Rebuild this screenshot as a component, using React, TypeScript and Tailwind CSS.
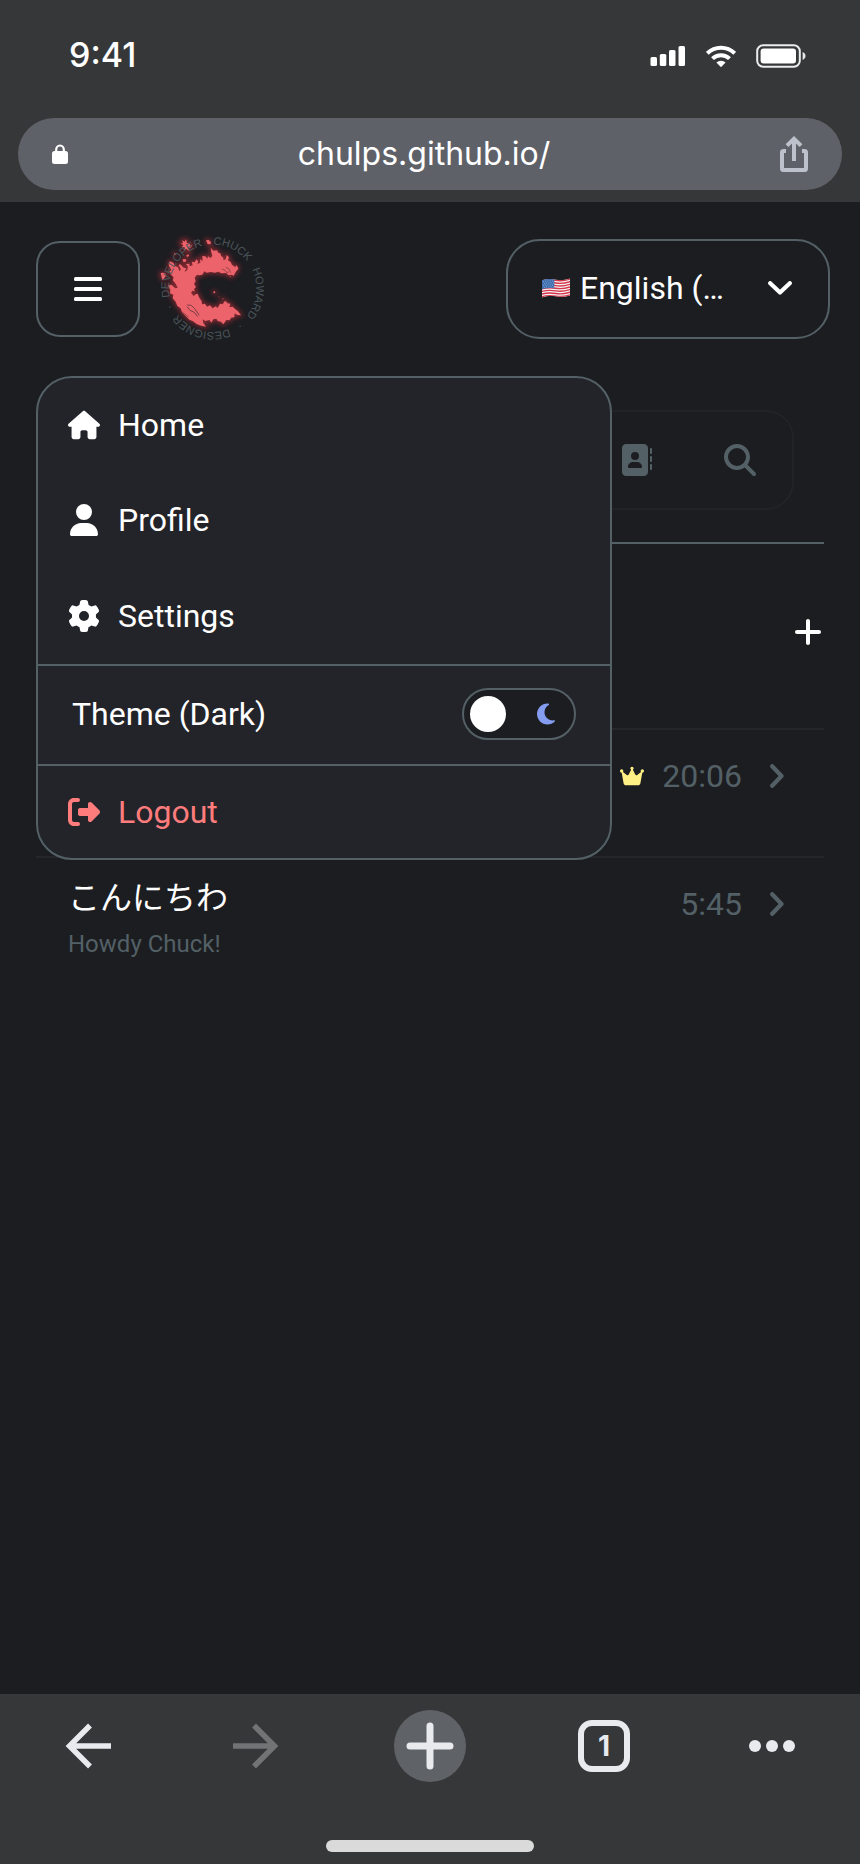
import { useState } from "react";
import type { ReactNode } from "react";
import {
  FaAddressBook,
  FaCrown,
  FaGear,
  FaHouse,
  FaMagnifyingGlass,
  FaMoon,
  FaPlus,
  FaRightFromBracket,
  FaUser,
} from "react-icons/fa6";

function SignalIcon() {
  return (
    <svg viewBox="0 0 36 22" className="h-[22px] w-9" fill="currentColor" aria-hidden="true">
      <rect x="0.5" y="12" width="6.5" height="9" rx="1.5" />
      <rect x="9.8" y="9" width="6.5" height="12" rx="1.5" />
      <rect x="19" y="5" width="6.5" height="16" rx="1.5" />
      <rect x="28.5" y="1" width="6.5" height="20" rx="1.5" />
    </svg>
  );
}

function WifiIcon() {
  return (
    <svg viewBox="0 0 30 22" className="h-[22px] w-[30px]" aria-hidden="true">
      <g fill="none" stroke="currentColor" strokeWidth="4">
        <path d="M1.3 8.3A19.4 19.4 0 0 1 28.7 8.3" />
        <path d="M6.5 13.7A12 12 0 0 1 23.5 13.7" />
      </g>
      <path d="M10.4 17.6a6.5 6.5 0 0 1 9.2 0L15 22.2z" fill="currentColor" />
    </svg>
  );
}

function BatteryIcon() {
  return (
    <svg viewBox="0 0 50 24" className="h-6 w-[50px]" aria-hidden="true">
      <rect x="1.2" y="1.2" width="42.6" height="21.6" rx="6" fill="none" stroke="#eceded" strokeWidth="2" />
      <rect x="4.6" y="4.6" width="35.4" height="14.8" rx="3" fill="#fff" />
      <path d="M46.600 8c1.900.7 2.900 2.300 2.900 4s-1 3.300-2.900 4z" fill="#e6e7e8" />
    </svg>
  );
}

function LockIcon() {
  return (
    <svg viewBox="0 0 16 20" className="h-5 w-4" aria-hidden="true">
      <rect x="0" y="7" width="16" height="13" rx="2.500" fill="#fff" />
      <path d="M4.200 8V5.500a3.800 4 0 0 1 7.600 0V8" fill="none" stroke="#fff" strokeWidth="2.200" />
    </svg>
  );
}

function ShareIcon() {
  return (
    <svg viewBox="0 0 28 36" className="h-9 w-7" fill="none" stroke="#bdc1cb" strokeWidth="4" aria-hidden="true">
      <path d="M6 15H3.500A1.500 1.500 0 0 0 2 16.500V32.500A1.500 1.500 0 0 0 3.500 34H24.500A1.500 1.500 0 0 0 26 32.500V16.500A1.500 1.500 0 0 0 24.500 15H22" />
      <path d="M14 25V4" />
      <path d="M7 9.700L14 2.800l7 6.900" />
    </svg>
  );
}

function ChevronDown() {
  return (
    <svg viewBox="0 0 24 14" className="ml-auto h-3.5 w-6 shrink-0" fill="none" stroke="currentColor" strokeWidth="4.200" strokeLinecap="round" strokeLinejoin="round" aria-hidden="true">
      <path d="M2.200 2.200L12 11.500L21.800 2.200" />
    </svg>
  );
}

function ChevronRight() {
  return (
    <svg viewBox="0 0 14 24" className="ml-7 h-6 w-3.5 shrink-0" fill="none" stroke="currentColor" strokeWidth="4.200" strokeLinecap="round" strokeLinejoin="round" aria-hidden="true">
      <path d="M2.200 2.200L11.500 12L2.200 21.800" />
    </svg>
  );
}

function UsFlag() {
  return (
    <svg viewBox="0 0 28 20" className="h-5 w-7 shrink-0" aria-hidden="true">
      <defs>
        <clipPath id="flag-shape">
          <path d="M0 2.200C5 .8 9 .8 14 1.700S23 2 28 .4V17.600C23 19.200 19 19 14 18.300S5 17.800 0 19.400z" />
        </clipPath>
      </defs>
      <g clipPath="url(#flag-shape)">
        <rect width="28" height="20" fill="#f4f2f3" />
        <g fill="none" stroke="#d5354a" strokeWidth="1.400">
          <path d="M0 2.900C5 1.500 9 1.500 14 2.400S23 2.700 28 1.100" />
          <path d="M0 5.500C5 4.100 9 4.100 14 5S23 5.300 28 3.700" />
          <path d="M0 8.100C5 6.700 9 6.700 14 7.600S23 7.900 28 6.300" />
          <path d="M0 10.800C5 9.400 9 9.400 14 10.300S23 10.600 28 9" />
          <path d="M0 13.400C5 12 9 12 14 12.900S23 13.200 28 11.600" />
          <path d="M0 16C5 14.600 9 14.600 14 15.500S23 15.800 28 14.200" />
          <path d="M0 18.700C5 17.300 9 17.300 14 18.200S23 18.500 28 16.900" />
        </g>
        <path d="M0 1.500C4 .7 8 .6 12.300 1.300V10.500C8 9.800 4 10.100 0 11.200z" fill="#3f6fb0" />
        <g fill="none" stroke="#a9c4e6" strokeWidth="0.700" strokeDasharray="0.800 1.500">
          <path d="M1 3.700C5 2.800 8 2.700 12 3.300" />
          <path d="M2 5.700C5 4.900 8 4.700 12 5.300" />
          <path d="M1 7.700C5 6.800 8 6.700 12 7.300" />
          <path d="M2 9.500C5 8.700 8 8.600 12 9.100" />
        </g>
      </g>
    </svg>
  );
}

function Logo() {
  return (
    <svg viewBox="18 24 336 336" className="size-28 overflow-visible" role="img" aria-label="Chuck Howard">
      <defs>
        <path id="logo-ring" d="M188 59a131 131 0 0 1 0 262a131 131 0 0 1 0-262" />
        <filter id="logo-glow" x="-30%" y="-30%" width="160%" height="160%">
          <feGaussianBlur stdDeviation="8" />
        </filter>
        <g id="logo-splash">
          <path d="M182 68L190 77 202 76 203 82 212 86 213 93 219 97 221 106 227 103 230 90 237 97 234 106 242 111 246 119 256 127 258 121 262 124 265 131 257 141 251 152 245 149 236 151 228 144 214 145 205 140 195 143 182 141 170 143 163 139 157 149 148 151 141 149 134 158 137 168 132 177 138 186 132 192 135 199 128 197 123 203 131 213 137 208 143 206 147 217 155 229 156 238 165 236 171 245 180 241 188 250 197 244 203 249 210 236 218 238 225 227 233 235 241 236 238 247 248 245 256 253 264 259 273 271 262 270 254 265 253 277 243 278 239 286 229 285 220 298 213 290 203 288 199 281 190 283 184 293 178 285 166 288 158 283 160 294 168 305 154 302 140 297 128 288 118 284 106 272 96 262 92 250 82 243 77 230 68 220 70 209 60 205 61 194 53 181 64 179 76 190 83 188 77 176 68 166 71 157 63 149 58 139 64 136 56 121 59 109 70 113 74 122 84 127 88 139 93 133 86 121 90 117 101 128 109 130 103 141 112 135 114 125 108 117 118 116 119 124 128 121 125 110 134 112 139 103 144 108 143 117 151 113 150 103 158 108 157 93 166 94 172 101 174 94 182 99 187 92 184 82z" />
          <path d="M97 46l7 4 4-7 3 11 8 2 2 7 6-5-3 8-9 5 3 7-9-6-7 4 2-9-8-1 4-5-8-7 7 1z" />
          <path d="M168 46l8-1 7 7-2 6-8-1z" />
          <path d="M32 144l8-1 8 4-2 8-6 8-3 2z" />
          <path d="M98 103l8-1 3 4-3 5-7-1z" />
          <path d="M109 91l7-3 1 5-6 3z" />
          <path d="M73 84l4 2-1 5-4-3z" />
          <circle cx="193" cy="202" r="3" />
          <circle cx="207" cy="216" r="1.200" />
          <circle cx="219" cy="221" r="1.500" />
          <circle cx="241" cy="155" r="1.500" />
        </g>
      </defs>
      <use href="#logo-splash" fill="#e0323c" stroke="#e0323c" strokeWidth="8" opacity="0.55" filter="url(#logo-glow)" />
      <use href="#logo-splash" fill="#ec636b" />
      <g fill="none" stroke="#1c1d21" strokeLinecap="round" opacity="0.8">
        <path d="M112 240l12 1 9 9 8 11 6 9" strokeWidth="2" />
        <path d="M112 246l8 10 13 6 9 12" strokeWidth="2" />
        <path d="M217 132l8 4 5 7 6-2" strokeWidth="1.500" />
        <path d="M229 128l7 3 6 11" strokeWidth="1.500" />
        <path d="M98 262l17 14" strokeWidth="1.500" />
      </g>
      <g fill="#4b565b" fontFamily="Liberation Sans, Arial, sans-serif" fontSize="33">
        <text><textPath href="#logo-ring" startOffset="2">CHUCK</textPath></text>
        <text><textPath href="#logo-ring" startOffset="147">HOWARD</textPath></text>
        <text><textPath href="#logo-ring" startOffset="324">·</textPath></text>
        <text><textPath href="#logo-ring" startOffset="361">DESIGNER</textPath></text>
        <text><textPath href="#logo-ring" startOffset="558">·</textPath></text>
        <text><textPath href="#logo-ring" startOffset="590">DEVELOPER</textPath></text>
      </g>
    </svg>
  );
}

function MenuItem({ icon, children }: { icon: ReactNode; children: ReactNode }) {
  return (
    <li className="flex h-24 first:h-[94px]">
      <a href="#" className="flex flex-1 items-center gap-[18px] px-[30px]">
        {icon}
        {children}
      </a>
    </li>
  );
}

function MainMenu() {
  const [dark, setDark] = useState(true);
  return (
    <nav
      aria-label="Main"
      className="absolute top-[174px] left-9 z-10 w-[576px] rounded-[36px] border-2 border-[#536066] bg-[#232429]"
    >
      <ul>
        <MenuItem icon={<FaHouse />}>Home</MenuItem>
        <MenuItem icon={<FaUser />}>Profile</MenuItem>
        <MenuItem icon={<FaGear />}>Settings</MenuItem>
      </ul>
      <label className="flex h-[102px] items-center justify-between border-y-2 border-[#536066] px-[34px] pb-0.5">
        Theme (Dark)
        <input
          type="checkbox"
          role="switch"
          className="sr-only"
          checked={dark}
          onChange={(event) => setDark(event.target.checked)}
        />
        <span className="flex h-[52px] w-[114px] items-center justify-between rounded-full border-2 border-[#536066] bg-[#1c1d21] pr-4 pl-1.5">
          <span className="size-9 rounded-full bg-white" />
          <FaMoon className="size-6 text-[#849df0]" />
        </span>
      </label>
      <button type="button" className="flex h-[92px] w-full items-center gap-[18px] px-[30px] text-[#ff7c7c]">
        <FaRightFromBracket />
        Logout
      </button>
    </nav>
  );
}

function ChatRow({ title, preview, time, owner }: { title?: string; preview?: string; time: string; owner?: boolean }) {
  return (
    <li className="border-t-2 border-[#24262a]">
      <a href="#" className="flex min-h-[126px] items-start justify-between pr-10 pl-8">
        <span className="flex flex-col pt-[17px]">
          <span className="leading-[46px]">{title}</span>
          <span className="text-2xl leading-[46px] text-[#536066]">{preview}</span>
        </span>
        <span className="flex h-[92px] items-center text-[#536066]">
          {owner && <FaCrown className="mr-[18px] size-6 text-[#fff085]" />}
          {time}
          <ChevronRight />
        </span>
      </a>
    </li>
  );
}

export default function App() {
  return (
    <div className="flex min-h-screen flex-col bg-[#1c1d21] font-[Roboto,'Noto_Sans_CJK_JP',sans-serif] text-[32px] leading-10 text-white">
      <header className="bg-[#363738] px-[18px] pb-3 font-[Inter,sans-serif]">
        <div className="flex h-[110px] items-center justify-between pr-9 pl-[51px]">
          <time className="text-[34px] font-medium">9:41</time>
          <div className="flex items-center gap-5 pt-0.5">
            <SignalIcon />
            <WifiIcon />
            <BatteryIcon />
          </div>
        </div>
        <div className="mt-2 flex h-[72px] items-center rounded-full bg-[#5f6168] px-[34px]">
          <LockIcon />
          <span className="flex-1 text-center">chulps.github.io/</span>
          <button type="button" aria-label="Share">
            <ShareIcon />
          </button>
        </div>
      </header>

      <main className="relative flex-1">
        <div className="flex items-center justify-between px-[30px] pt-[31px] pl-9">
          <div className="flex items-center gap-4">
            <button
              type="button"
              aria-label="Menu"
              className="flex h-24 w-[104px] items-center justify-center rounded-3xl border-2 border-[#536066]"
            >
              <svg viewBox="0 0 28 24" className="h-6 w-7" fill="currentColor" aria-hidden="true">
                <rect width="28" height="4" rx="1.500" />
                <rect y="10" width="28" height="4" rx="1.500" />
                <rect y="20" width="28" height="4" rx="1.500" />
              </svg>
            </button>
            <Logo />
          </div>
          <label className="flex h-[100px] w-[324px] items-center rounded-[34px] border-2 border-[#536066] pr-9 pb-0.5 pl-[34px]">
            <UsFlag />
            <select
              aria-label="Language"
              className="ml-2.5 w-[150px] appearance-none overflow-hidden bg-transparent text-ellipsis whitespace-nowrap outline-none"
            >
              <option>English (United States)</option>
            </select>
            <ChevronDown />
          </label>
        </div>

        <MainMenu />

        <div className="mt-[65px] px-9">
          <form className="mx-[30px] flex h-[100px] items-center rounded-[28px] border-2 border-[#222327] pr-9 pl-8 text-[#536066]">
            <input type="search" aria-label="Search" className="min-w-0 flex-1 bg-transparent outline-none" />
            <button type="button" aria-label="Contacts">
              <FaAddressBook />
            </button>
            <button type="submit" aria-label="Search" className="ml-[72px]">
              <FaMagnifyingGlass />
            </button>
          </form>
          <div className="mt-8 mb-2 flex h-[178px] items-center justify-end border-t-2 border-[#536066]">
            <button type="button" aria-label="New chat">
              <FaPlus />
            </button>
          </div>
          <ul>
            <ChatRow time="20:06" owner />
            <ChatRow title="こんにちわ" preview="Howdy Chuck!" time="5:45" />
          </ul>
        </div>
      </main>

      <footer className="bg-[#363738] pt-4 pb-3 text-[#e8eaed]">
        <div className="flex items-center justify-between px-[52px]">
          <div className="flex gap-24">
            <button type="button" aria-label="Back" className="flex size-[72px] items-center justify-center">
              <svg viewBox="0 0 46 46" className="size-[46px]" fill="none" stroke="currentColor" strokeWidth="5.500" aria-hidden="true">
                <path d="M46 23H5M25 2.500L4.500 23 25 43.500" />
              </svg>
            </button>
            <button type="button" aria-label="Forward" className="flex size-[72px] items-center justify-center text-[#727375]">
              <svg viewBox="0 0 46 46" className="size-[46px]" fill="none" stroke="currentColor" strokeWidth="5.500" aria-hidden="true">
                <path d="M0 23H41M21 2.500L41.500 23 21 43.500" />
              </svg>
            </button>
          </div>
          <button type="button" aria-label="New tab" className="flex size-[72px] items-center justify-center rounded-full bg-[#5f6368]">
            <svg viewBox="0 0 48 48" className="size-12" stroke="currentColor" strokeWidth="7" strokeLinecap="round" aria-hidden="true">
              <path d="M24 4V44M4 24H44" />
            </svg>
          </button>
          <div className="flex gap-24">
            <button type="button" aria-label="Tabs" className="flex size-[72px] items-center justify-center">
              <span className="flex size-[52px] items-center justify-center rounded-[14px] border-[6px] border-[#e8eaed] font-[Inter,sans-serif] text-[28px] font-bold">
                1
              </span>
            </button>
            <button type="button" aria-label="More" className="flex size-[72px] items-center justify-center">
              <svg viewBox="0 0 46 12" className="h-3 w-[46px]" fill="currentColor" aria-hidden="true">
                <circle cx="6" cy="6" r="6" />
                <circle cx="23" cy="6" r="6" />
                <circle cx="40" cy="6" r="6" />
              </svg>
            </button>
          </div>
        </div>
        <div className="mx-auto mt-[58px] h-3 w-52 rounded-full bg-[#dadada]" />
      </footer>
    </div>
  );
}
